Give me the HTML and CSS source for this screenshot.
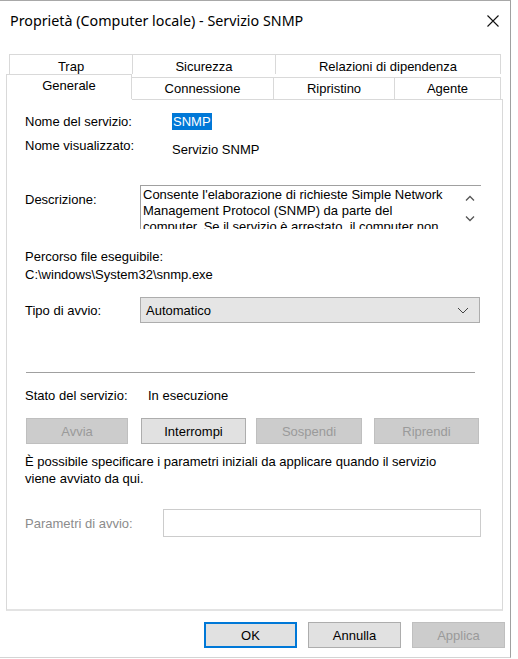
FILE: index.html
```html
<!DOCTYPE html>
<html lang="it">
<head>
    <meta charset="UTF-8">
    <title>Proprietà - Servizio SNMP</title>
    <link rel="stylesheet" href="styles.css">
</head>
<body>
    <div class="window">
        <div class="titlebar">
            <span class="title">Proprietà (Computer locale) - Servizio SNMP</span>
            <svg class="close" width="12" height="12" viewBox="0 0 12 12">
                <path d="M0.5 0.5 L11.5 11.5 M11.5 0.5 L0.5 11.5" stroke="#111" stroke-width="1.1" fill="none"/>
            </svg>
        </div>

        <div class="tabs">
            <div class="tab-row back">
                <div class="tab w-trap">Trap</div>
                <div class="tab w-sic">Sicurezza</div>
                <div class="tab w-rel">Relazioni di dipendenza</div>
            </div>
            <div class="tab-row front">
                <div class="tab selected">Generale</div>
                <div class="tab w-con">Connessione</div>
                <div class="tab w-rip">Ripristino</div>
                <div class="tab w-age">Agente</div>
            </div>
        </div>

        <div class="panel">
            <div class="row r-name">
                <span class="label">Nome del servizio:</span>
                <span class="value"><span class="highlight">SNMP</span></span>
            </div>
            <div class="row r-display">
                <span class="label">Nome visualizzato:</span>
                <span class="value shift">Servizio SNMP</span>
            </div>

            <div class="row r-desc">
                <span class="label desc-label">Descrizione:</span>
                <div class="desc-box">
                    <div class="desc-text">Consente l'elaborazione di richieste Simple Network Management Protocol (SNMP) da parte del computer. Se il servizio è arrestato, il computer non è in grado di elaborare le richieste SNMP.</div>
                    <div class="scroll">
                        <svg width="10" height="7" viewBox="0 0 10 7"><path d="M1 5.5 L5 1.5 L9 5.5" stroke="#555" stroke-width="1.3" fill="none"/></svg>
                        <svg width="10" height="7" viewBox="0 0 10 7"><path d="M1 1.5 L5 5.5 L9 1.5" stroke="#555" stroke-width="1.3" fill="none"/></svg>
                    </div>
                </div>
            </div>

            <div class="line l-path-label">Percorso file eseguibile:</div>
            <div class="line l-path">C:\windows\System32\snmp.exe</div>

            <div class="row r-type">
                <span class="label">Tipo di avvio:</span>
                <div class="combo">
                    <span>Automatico</span>
                    <svg width="12" height="7" viewBox="0 0 12 7"><path d="M1 1 L6 6 L11 1" stroke="#444" stroke-width="1" fill="none"/></svg>
                </div>
            </div>

            <hr class="separator">

            <div class="row r-state">
                <span class="label">Stato del servizio:</span>
                <span class="state">In esecuzione</span>
            </div>

            <div class="buttons">
                <button class="btn disabled">Avvia</button>
                <button class="btn">Interrompi</button>
                <button class="btn disabled">Sospendi</button>
                <button class="btn disabled">Riprendi</button>
            </div>

            <p class="info">È possibile specificare i parametri iniziali da applicare quando il servizio viene avviato da qui.</p>

            <div class="row r-params">
                <span class="label muted">Parametri di avvio:</span>
                <div class="params-box"></div>
            </div>
        </div>

        <div class="footer">
            <button class="btn foot default">OK</button>
            <button class="btn foot">Annulla</button>
            <button class="btn foot disabled">Applica</button>
        </div>
    </div>
</body>
</html>
```

FILE: styles.css
```css
body {
    margin: 0;
    background: #fff;
    font-family: 'Liberation Sans', Arial, sans-serif;
    font-size: 13px;
    color: #000;
}
.window {
    width: 510px;
    height: 656px;
    border-top: 1px solid #a8a8a8;
    border-right: 1px solid #a0a0a0;
    border-bottom: 1px solid #d4d4d4;
    background: #fff;
}
.titlebar {
    height: 38px;
    display: flex;
    align-items: center;
    justify-content: space-between;
    padding: 0 11px 0 10px;
}
.title {
    font-family: 'Noto Sans', 'Open Sans', sans-serif;
    font-size: 14.3px;
    color: #000;
}
.close {
    margin-top: 1px;
}

/* schede */
.tabs {
    margin-top: 15px;
}
.tab-row {
    display: flex;
}
.tab-row.back {
    margin-left: 9px;
    height: 20px;
}
.tab-row.front {
    margin-left: 6px;
    height: 25px;
    align-items: flex-end;
}
.tab {
    box-sizing: border-box;
    border: 1px solid #d9d9d9;
    border-bottom: none;
    display: flex;
    align-items: center;
    justify-content: center;
    background: #fff;
}
.back .tab {
    height: 20px;
    border-right: none;
    padding-top: 4px;
}
.back .tab:last-child {
    border-right: 1px solid #d9d9d9;
}
.front .tab {
    height: 22px;
    border-left: none;
}
.front .tab.selected {
    height: 25px;
    width: 126px;
    border-left: 1px solid #d9d9d9;
    align-items: flex-start;
    padding-top: 3px;
}
.w-trap { width: 123px; }
.w-sic { width: 143px; }
.w-rel { width: 226px; }
.w-con { width: 142px; }
.w-rip { width: 121px; }
.w-age { width: 106px; }

.panel {
    margin-left: 6px;
    width: 497px;
    height: 512px;
    box-sizing: border-box;
    border: 1px solid #d9d9d9;
    border-top: none;
    border-bottom: 2px solid #e3e3e3;
    padding: 0 0 0 18px;
}
.panel::before {
    content: "";
    display: block;
    margin-left: 107px;
    margin-right: -1px;
    border-top: 1px solid #d9d9d9;
}
.row {
    display: flex;
    align-items: center;
}
.label {
    width: 147px;
    flex: none;
}
.r-name {
    margin-top: 13px;
    height: 16px;
}
.highlight {
    background: #0078d7;
    color: #fff;
    padding: 1px 1px;
}
.r-display {
    margin-top: 8px;
    height: 16px;
}
.shift {
    margin-top: 8px;
}
.r-desc {
    margin-top: 32px;
    align-items: flex-start;
}
.desc-label {
    width: 115px;
    margin-top: 7px;
    line-height: 16px;
}
.desc-box {
    width: 340px;
    height: 43px;
    border-top: 1px solid #a0a0a0;
    border-left: 1px solid #a0a0a0;
    display: flex;
    overflow: hidden;
}
.desc-text {
    width: 304px;
    flex: none;
    padding: 1px 14px 0 2px;
    line-height: 16px;
}
.scroll {
    display: flex;
    flex-direction: column;
    gap: 13px;
    padding: 9px 0 0 4px;
}
.line {
    height: 18px;
    display: flex;
    align-items: center;
}
.l-path-label {
    margin-top: 18px;
}
.r-type {
    margin-top: 14px;
}
.r-type .label {
    width: 115px;
}
.combo {
    box-sizing: border-box;
    width: 340px;
    height: 26px;
    background: #e5e5e5;
    border: 1px solid #adadad;
    display: flex;
    align-items: center;
    justify-content: space-between;
    padding: 0 10px 0 5px;
}
.separator {
    margin: 49px 0 0 1px;
    width: 449px;
    height: 0;
    border: none;
    border-top: 1px solid #a0a0a0;
}
.r-state {
    margin-top: 13px;
    height: 18px;
}
.r-state .label {
    width: 123px;
}
.buttons {
    display: flex;
    margin-top: 14px;
}
.btn {
    box-sizing: border-box;
    font-family: 'Liberation Sans', Arial, sans-serif;
    font-size: 13px;
    height: 26px;
    background: #e1e1e1;
    border: 1px solid #adadad;
    color: #000;
    padding: 0;
}
.btn.disabled {
    background: #cccccc;
    border-color: #bfbfbf;
    color: #9a9a9a;
}
.buttons .btn {
    width: 105px;
}
.buttons .btn:nth-child(1) { margin-left: 1px; width: 102px; }
.buttons .btn:nth-child(2) { margin-left: 13px; }
.buttons .btn:nth-child(3) { margin-left: 10px; width: 106px; }
.buttons .btn:nth-child(4) { margin-left: 12px; }
.info {
    margin: 9px 0 0;
    width: 425px;
    line-height: 17px;
}
.r-params {
    margin-top: 22px;
}
.muted {
    color: #8c8c8c;
    width: 138px;
}
.params-box {
    box-sizing: border-box;
    width: 318px;
    height: 28px;
    border: 1px solid #cccccc;
}
.footer {
    display: flex;
    justify-content: flex-end;
    padding: 11px 5px 0 0;
    gap: 11px;
}
.btn.foot {
    width: 93px;
    height: 26px;
}
.btn.default {
    border: 2px solid #0078d7;
}
```
